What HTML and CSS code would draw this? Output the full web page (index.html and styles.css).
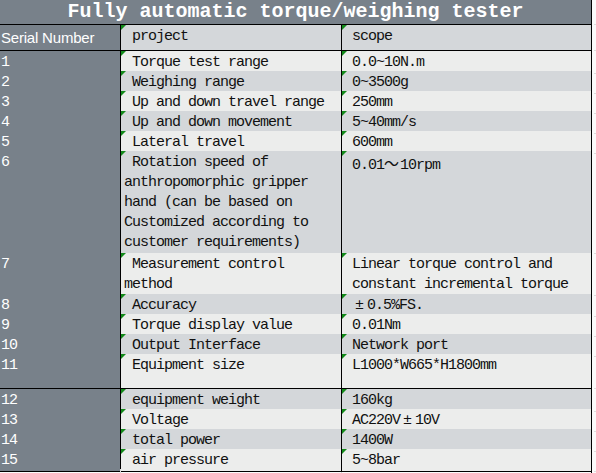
FILE: index.html
```html
<!DOCTYPE html>
<html>
<head>
<meta charset="utf-8">
<link rel="stylesheet" href="styles.css">
</head>
<body>
<div class="sheet">
  <div class="row title-row">
    <div class="title">Fully automatic torque/weighing tester</div>
    <div class="ghost"></div>
  </div>
  <div class="row head alt">
    <div class="c1 sans">Serial Number</div>
    <div class="c2 mark"> project</div>
    <div class="c3 mark">scope</div>
    <div class="ghost"></div>
  </div>
  <div class="row">
    <div class="c1">1</div>
    <div class="c2 mark"> Torque test range</div>
    <div class="c3 mark">0.0~10N.m</div>
    <div class="ghost"></div>
  </div>
  <div class="row alt">
    <div class="c1">2</div>
    <div class="c2 mark"> Weighing range</div>
    <div class="c3 mark">0~3500g</div>
    <div class="ghost"></div>
  </div>
  <div class="row">
    <div class="c1">3</div>
    <div class="c2 mark"> Up and down travel range</div>
    <div class="c3 mark">250mm</div>
    <div class="ghost"></div>
  </div>
  <div class="row alt">
    <div class="c1">4</div>
    <div class="c2 mark"> Up and down movement</div>
    <div class="c3 mark">5~40mm/s</div>
    <div class="ghost"></div>
  </div>
  <div class="row">
    <div class="c1">5</div>
    <div class="c2 mark"> Lateral travel</div>
    <div class="c3 mark">600mm</div>
    <div class="ghost"></div>
  </div>
  <div class="row alt tall5">
    <div class="c1">6</div>
    <div class="c2 mark"> Rotation speed of<br>anthropomorphic gripper<br>hand (can be based on<br>Customized according to<br>customer requirements)</div>
    <div class="c3 mark">0.01<span class="wave">～</span>10rpm</div>
    <div class="ghost"></div>
  </div>
  <div class="row tall2">
    <div class="c1">7</div>
    <div class="c2 mark"> Measurement control<br>method</div>
    <div class="c3 mark">Linear torque control and<br>constant incremental torque</div>
    <div class="ghost"></div>
  </div>
  <div class="row alt">
    <div class="c1">8</div>
    <div class="c2 mark"> Accuracy</div>
    <div class="c3 mark"><span class="pm">±</span>0.5%FS.</div>
    <div class="ghost"></div>
  </div>
  <div class="row">
    <div class="c1">9</div>
    <div class="c2 mark"> Torque display value</div>
    <div class="c3 mark">0.01Nm</div>
    <div class="ghost"></div>
  </div>
  <div class="row alt">
    <div class="c1">10</div>
    <div class="c2 mark"> Output Interface</div>
    <div class="c3 mark">Network port</div>
    <div class="ghost"></div>
  </div>
  <div class="row tall-s">
    <div class="c1">11</div>
    <div class="c2 mark"> Equipment size</div>
    <div class="c3 mark">L1000*W665*H1800mm</div>
    <div class="ghost"></div>
  </div>
  <div class="row alt">
    <div class="c1">12</div>
    <div class="c2 mark"> equipment weight</div>
    <div class="c3 mark">160kg</div>
    <div class="ghost"></div>
  </div>
  <div class="row">
    <div class="c1">13</div>
    <div class="c2 mark"> Voltage</div>
    <div class="c3 mark">AC220V<span class="pm">±</span>10V</div>
    <div class="ghost"></div>
  </div>
  <div class="row alt">
    <div class="c1">14</div>
    <div class="c2 mark"> total power</div>
    <div class="c3 mark">1400W</div>
    <div class="ghost"></div>
  </div>
  <div class="row">
    <div class="c1">15</div>
    <div class="c2 mark"> air pressure</div>
    <div class="c3 mark">5~8bar</div>
    <div class="ghost"></div>
  </div>
  <div class="row tail">
    <div class="t1"></div>
    <div class="t2"></div>
    <div class="t3"></div>
    <div></div>
  </div>
</div>
</body>
</html>
```
FILE: styles.css
```css
html, body {
  margin: 0;
  padding: 0;
  background: #fbfbfb;
}

.sheet {
  width: 596px;
  height: 473px;
  overflow: hidden;
  font-family: "Liberation Mono", "Noto Sans CJK SC", monospace;
  font-size: 15px;
  letter-spacing: -1px;
  color: #111;
}

.row {
  display: grid;
  grid-template-columns: 121px 221px 250px 1fr;
  height: 20px;
}

.row > div {
  box-sizing: border-box;
  height: 100%;
}

.title-row {
  height: 25px;
  grid-template-columns: 592px 1fr;
}

.title {
  background: #78818a;
  color: #fff;
  font-weight: bold;
  font-size: 20px;
  letter-spacing: 0;
  line-height: 24px;
  text-align: center;
  border-bottom: 1px solid #000;
  border-right: 1px solid #000;
  white-space: pre;
}

.head { height: 26px; }
.tall5 { height: 102px; }
.tall2 { height: 41px; }
.tall-s { height: 35px; }

.c1, .c2, .c3 {
  border-right: 1px solid #000;
  border-bottom: 1px solid #000;
  white-space: pre;
  line-height: 20px;
  padding-top: 2px;
}

.c1 {
  background: #78818a;
  color: #fff;
  padding-left: 1px;
}

.c2 {
  background: #ecedec;
  padding-left: 3px;
}

.c3 {
  background: #ecedec;
  padding-left: 10px;
}

.alt .c2, .alt .c3 {
  background: #d4d7da;
}

.sans {
  font-family: "Liberation Sans", Arial, sans-serif;
  font-size: 15px;
  letter-spacing: -0.2px;
  line-height: 25px;
  padding-top: 0;
}

.mark {
  position: relative;
}

.mark::before {
  content: "";
  position: absolute;
  left: 0;
  top: 0;
  border-top: 5px solid #12891a;
  border-right: 5px solid transparent;
}

.pm {
  padding: 0 4px 0 3px;
}

.wave {
  font-family: "Noto Sans CJK SC", sans-serif;
  font-size: 15px;
  letter-spacing: 0;
  padding-right: 1px;
}

.ghost {
  margin-left: 2px;
  border-bottom: 1px solid #dedede;
}

.tail {
  height: 5px;
}

.tail .t1, .tail .t2 {
  border-right: 1px solid #dcdcdc;
}

.tail .t3 {
  border-right: 1px solid #000;
}
```
